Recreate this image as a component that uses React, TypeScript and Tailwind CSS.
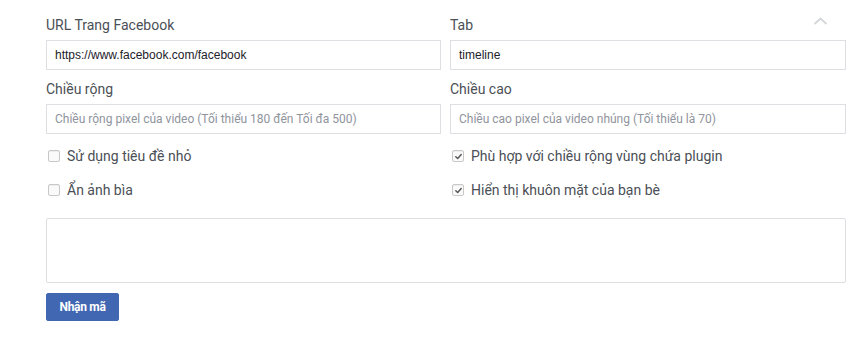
import React from "react";

function Check({ checked }: { checked?: boolean }) {
  return (
    <span className="flex h-[12px] w-[12px] items-center justify-center rounded-[2px] border border-[#c8c8c8] bg-[#fafafa] shadow-[inset_0_1px_1px_rgba(0,0,0,0.06)]">
      {checked && (
        <svg width="9" height="9" viewBox="0 0 10 10">
          <path d="M2 5.2 L4.1 7.2 L8 2.8" fill="none" stroke="#555" strokeWidth="1.6" strokeLinecap="round" strokeLinejoin="round" />
        </svg>
      )}
    </span>
  );
}

function Field({ label, value, placeholder }: { label: string; value?: string; placeholder?: string }) {
  return (
    <div className="flex flex-col">
      <label className="h-[20px] text-[14px] leading-[20px] text-[#4b4f56]">{label}</label>
      <div className="mt-[5px] flex h-[30px] items-center border border-[#dddfe2] bg-white px-[8px]">
        {value ? (
          <span
            className="text-[12px] text-[#1d2129]"
            style={{ fontFamily: "'Liberation Sans', Arial, sans-serif" }}
          >
            {value}
          </span>
        ) : (
          <span className="text-[12px] text-[#90949c]">{placeholder}</span>
        )}
      </div>
    </div>
  );
}

function CheckRow({ label, checked }: { label: string; checked?: boolean }) {
  return (
    <div className="flex h-[20px] items-center gap-[7px] pl-[2px] text-[14px] text-[#4b4f56]">
      <Check checked={checked} />
      <span>{label}</span>
    </div>
  );
}

export default function App() {
  return (
    <div
      className="relative h-[338px] w-[868px] bg-white pl-[46px] pr-[22px] pt-[15px]"
      style={{ fontFamily: "Roboto, 'Liberation Sans', Arial, sans-serif" }}
    >
      <svg className="absolute left-[813px] top-[16px]" width="15" height="10" viewBox="0 0 15 10">
        <path d="M1.5 8 L7.5 2.5 L13.5 8" fill="none" stroke="#d3d5d9" strokeWidth="1.7" />
      </svg>
      <div className="grid grid-cols-[395px_396px] gap-x-[9px] gap-y-[9px]">
        <Field label="URL Trang Facebook" value="https://www.facebook.com/facebook" />
        <Field label="Tab" value="timeline" />
        <Field label="Chiều rộng" placeholder="Chiều rộng pixel của video (Tối thiểu 180 đến Tối đa 500)" />
        <Field label="Chiều cao" placeholder="Chiều cao pixel của video nhúng (Tối thiểu là 70)" />
      </div>
      <div className="mt-[12px] grid grid-cols-[395px_396px] gap-x-[9px] gap-y-[14px]">
        <CheckRow label="Sử dụng tiêu đề nhỏ" />
        <CheckRow label="Phù hợp với chiều rộng vùng chứa plugin" checked />
        <CheckRow label="Ẩn ảnh bìa" />
        <CheckRow label="Hiển thị khuôn mặt của bạn bè" checked />
      </div>
      <div className="mt-[18px] h-[65px] w-[800px] rounded-[2px] border border-[#dddfe2] bg-white" />
      <button className="mt-[10px] flex h-[28px] w-[73px] items-center justify-center rounded-[2px] border border-[#4267b2] bg-[#4267b2] text-[12px] font-bold tracking-[-0.3px] text-white">
        Nhận mã
      </button>
    </div>
  );
}
